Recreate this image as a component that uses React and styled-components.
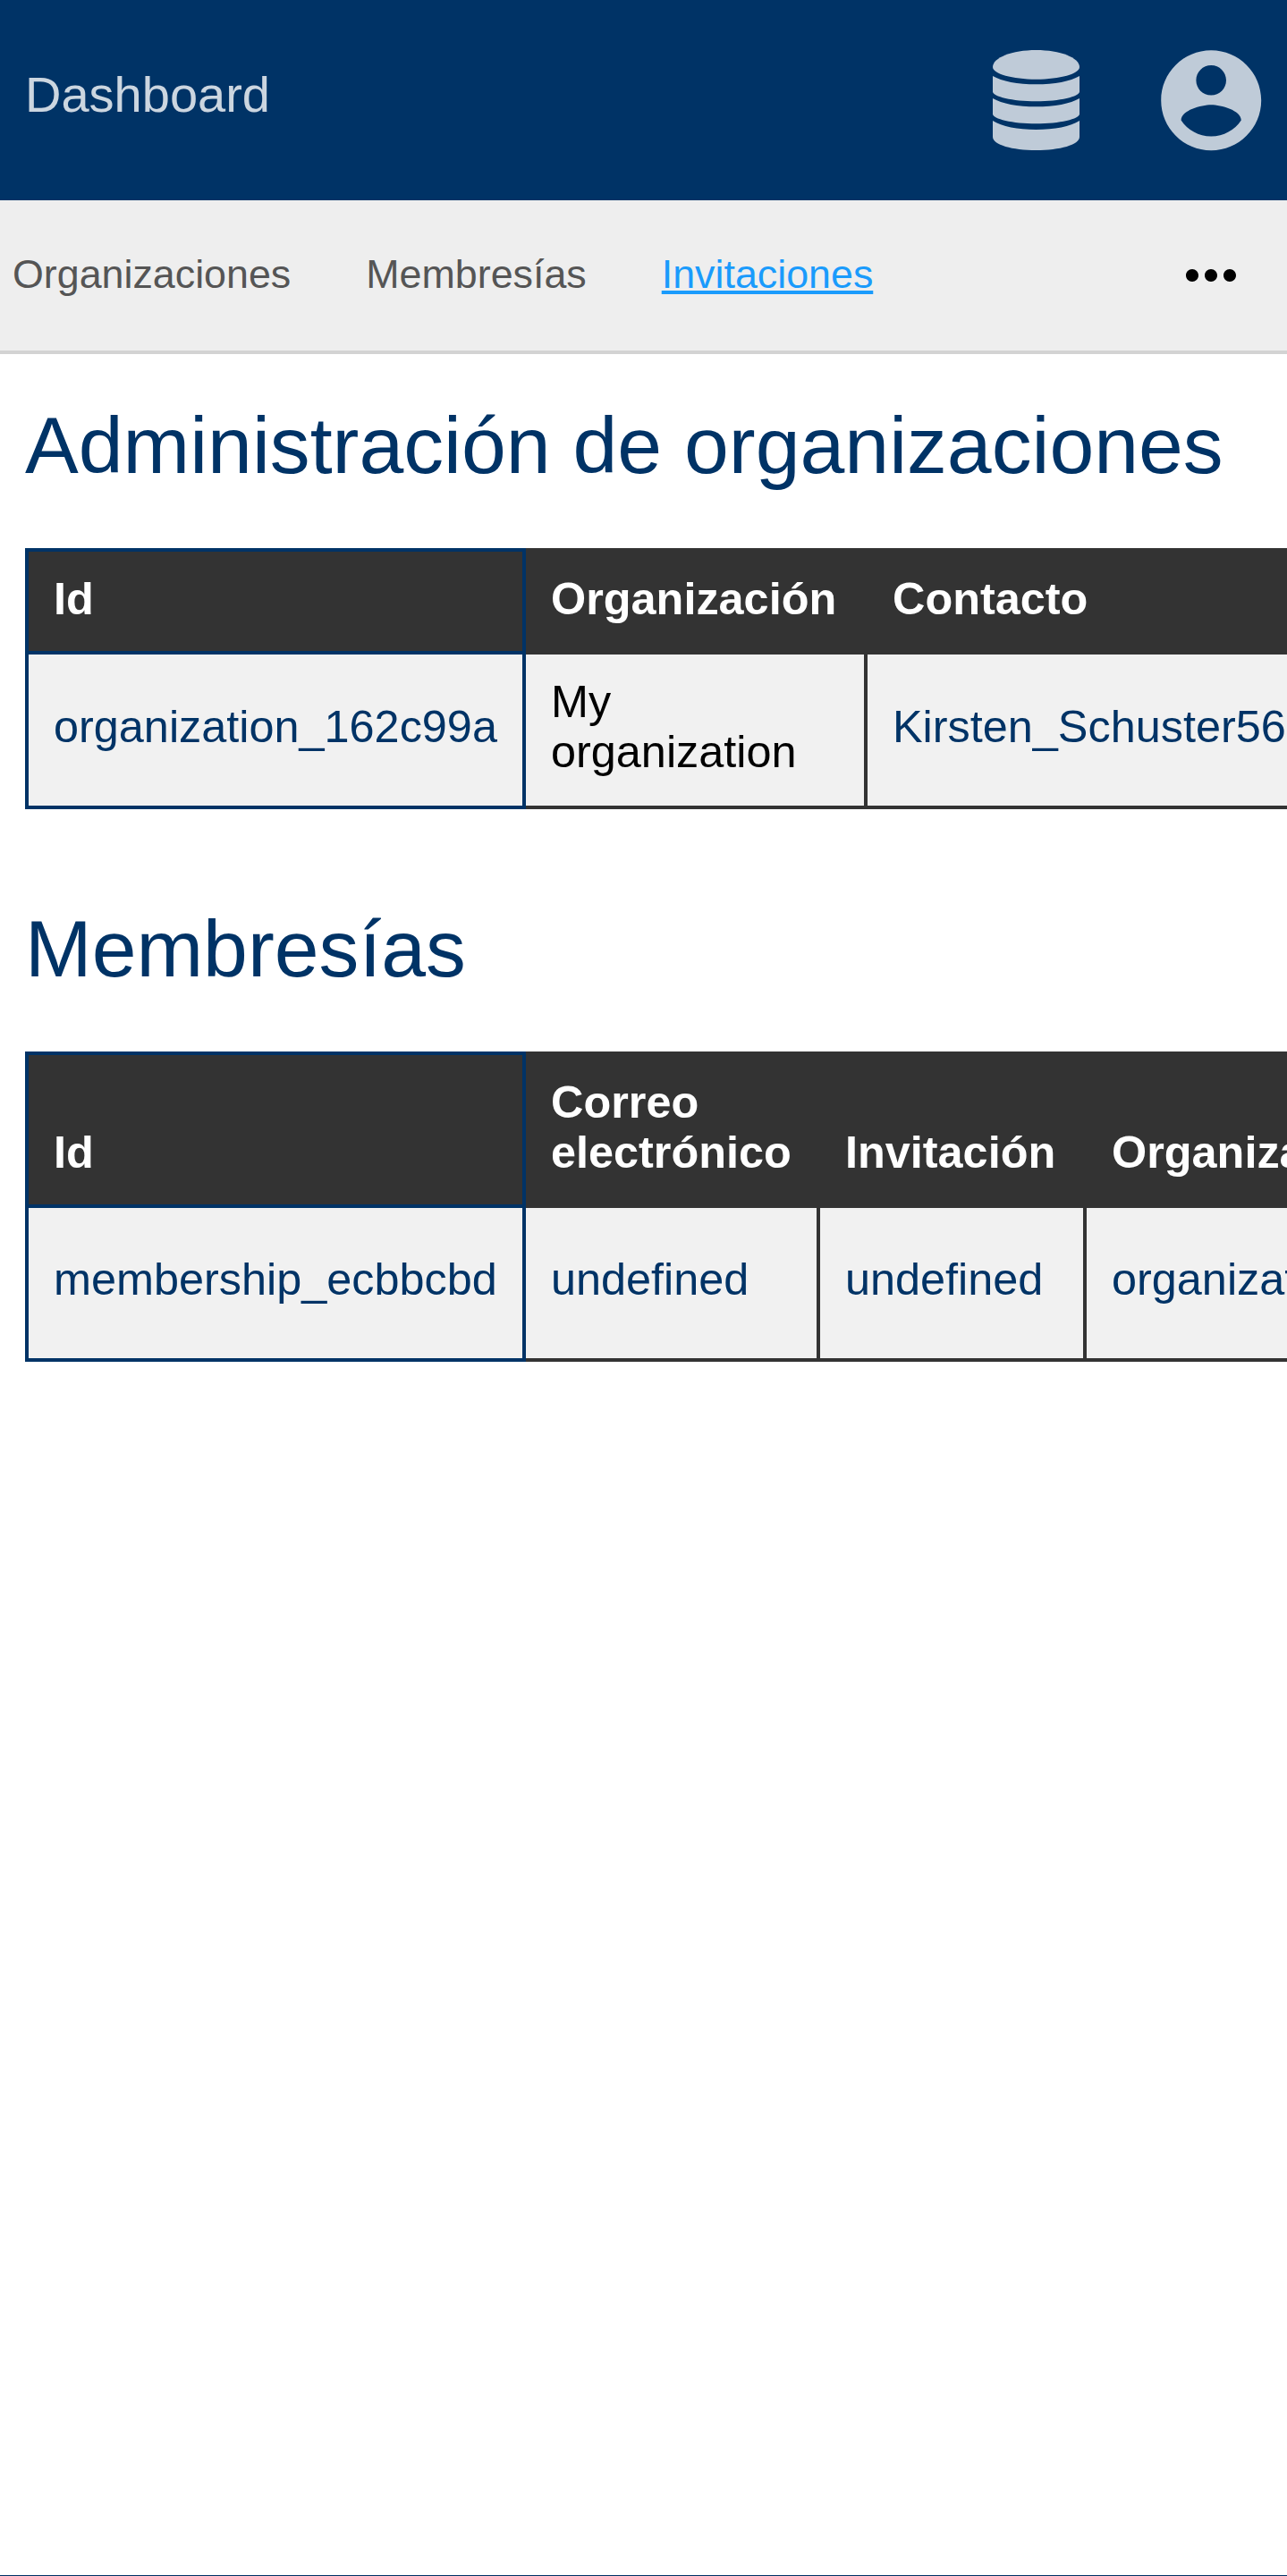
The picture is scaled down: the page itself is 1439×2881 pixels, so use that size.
import React from 'react';
import styled, { createGlobalStyle } from 'styled-components';
import { MdMoreHoriz } from 'react-icons/md';

const navy = '#003366';

const GlobalStyle = createGlobalStyle`
    html, body {
        margin: 0;
        padding: 0;
        background: #fff;
    }
    body {
        font-family: "Liberation Sans", Arial, sans-serif;
        font-size: 44.8px;
        overflow-x: hidden;
    }
`;

const Page = styled.div`
    display: flex;
    flex-direction: column;
    min-height: 2881px;
`;

const Header = styled.header`
    display: flex;
    align-items: center;
    justify-content: space-between;
    height: 224px;
    padding: 0 18px 0 28px;
    background-color: ${navy};
    color: rgba(255, 255, 255, 0.75);
`;

const Brand = styled.a`
    margin-bottom: 13px;
    font-size: 56px;
    color: rgba(255, 255, 255, 0.8);
    text-decoration: none;
`;

const HeaderIcons = styled.div`
    display: flex;
    align-items: center;
    gap: 80px;
`;

const Nav = styled.nav`
    display: flex;
    align-items: center;
    justify-content: space-between;
    box-sizing: border-box;
    height: 172px;
    padding: 0 18px 0 14px;
    background-color: #eee;
    border-bottom: 4px solid #d3d3d3;
`;

const NavLinks = styled.div`
    display: flex;
    gap: 84px;
    margin-bottom: 3px;
`;

const NavLink = styled.a`
    color: ${(props) => (props.$active ? '#1a9bfc' : '#555')};
    text-decoration: ${(props) => (props.$active ? 'underline' : 'none')};
`;

const MoreButton = styled.div`
    display: flex;
    justify-content: center;
    width: 134px;
    color: #000;
`;

const Main = styled.main`
    flex: 1;
    padding: 0 0 0 28px;
    overflow: hidden;
`;

const Title = styled.h1`
    margin: 53px 0 66px;
    font-size: 89.6px;
    font-weight: 400;
    line-height: 98px;
    color: ${navy};
    white-space: nowrap;
`;

const TableWrap = styled.div`
    margin-bottom: 107px;
    overflow: hidden;
`;

const Table = styled.table`
    table-layout: fixed;
    width: ${(props) => props.$width}px;
    border-collapse: collapse;
    font-size: 50.4px;
    line-height: 55.4px;
`;

const Th = styled.th`
    padding: 25px 28px 31px;
    text-align: left;
    vertical-align: bottom;
    font-weight: 700;
    color: #fff;
    background-color: #333;
    border: 4px solid ${(props) => (props.$first ? navy : '#333')};
`;

const Td = styled.td`
    height: 110px;
    padding: 25px 28px 33px;
    vertical-align: middle;
    background-color: #f1f1f1;
    color: ${(props) => (props.$plain ? '#000' : navy)};
    border: 4px solid ${(props) => (props.$first ? navy : '#333')};
    white-space: ${(props) => (props.$plain ? 'normal' : 'nowrap')};
`;

const Footer = styled.footer`
    height: 1px;
    background-color: ${navy};
`;

// four tier database, the icon packages only have the three tier one
const DatabaseIcon = () => (
    <svg width="97" height="112" viewBox="0 0 97 112" fill="currentColor">
        <path d="M0 19C0 8.5 21.7 0 48.5 0S97 8.5 97 19C97 26.5 75 32.7 48.5 32.7S0 26.5 0 19Z" />
        <path d="M0 29C10 35 28 38.3 48.5 38.3S87 35 97 29V46.5C97 52 75 57.3 48.5 57.3S0 52 0 46.5Z" />
        <path d="M0 54C10 60 28 63.3 48.5 63.3S87 60 97 54V71.5C97 77 75 82.3 48.5 82.3S0 77 0 71.5Z" />
        <path d="M0 79C10 85.5 28 89 48.5 89S87 85.5 97 79V97C97 106 75 112 48.5 112S0 106 0 97Z" />
    </svg>
);

const AccountIcon = () => (
    <svg width="134.4" height="134.4" viewBox="0 0 24 24" fill="currentColor">
        <path d="M12 2C6.48 2 2 6.48 2 12s4.48 10 10 10 10-4.48 10-10S17.52 2 12 2zm0 3c1.66 0 3 1.34 3 3s-1.34 3-3 3-3-1.34-3-3 1.34-3 3-3zm0 14.2c-2.5 0-4.71-1.28-6-3.22.03-1.99 4-3.08 6-3.08 1.99 0 5.97 1.09 6 3.08-1.29 1.94-3.5 3.22-6 3.22z" />
    </svg>
);

const DataTable = ({ widths, columns, cells }) => (
    <TableWrap>
        <Table $width={widths.reduce((a, b) => a + b, 0)}>
            <colgroup>
                {widths.map((w, i) => <col key={i} width={w} />)}
            </colgroup>
            <thead>
                <tr>
                    {columns.map((c, i) => <Th key={c} $first={i === 0}>{c}</Th>)}
                </tr>
            </thead>
            <tbody>
                <tr>
                    {cells.map((c, i) => (
                        <Td key={i} $first={i === 0} $plain={c.plain}>{c.text}</Td>
                    ))}
                </tr>
            </tbody>
        </Table>
    </TableWrap>
);

const App = () => (
    <Page>
        <GlobalStyle />
        <Header>
            <Brand>Dashboard</Brand>
            <HeaderIcons>
                <DatabaseIcon />
                <AccountIcon />
            </HeaderIcons>
        </Header>
        <Nav>
            <NavLinks>
                <NavLink>Organizaciones</NavLink>
                <NavLink>Membresías</NavLink>
                <NavLink $active>Invitaciones</NavLink>
            </NavLinks>
            <MoreButton><MdMoreHoriz size={84} /></MoreButton>
        </Nav>
        <Main>
            <Title>Administración de organizaciones</Title>
            <DataTable
                widths={[556, 382, 600]}
                columns={['Id', 'Organización', 'Contacto']}
                cells={[
                    { text: 'organization_162c99a' },
                    { text: 'My organization', plain: true },
                    { text: 'Kirsten_Schuster56' },
                ]}
            />
            <Title>Membresías</Title>
            <DataTable
                widths={[556, 329, 298, 600]}
                columns={['Id', 'Correo electrónico', 'Invitación', 'Organización']}
                cells={[
                    { text: 'membership_ecbbcbd' },
                    { text: 'undefined' },
                    { text: 'undefined' },
                    { text: 'organization_162c99a' },
                ]}
            />
        </Main>
        <Footer />
    </Page>
);

export default App;
